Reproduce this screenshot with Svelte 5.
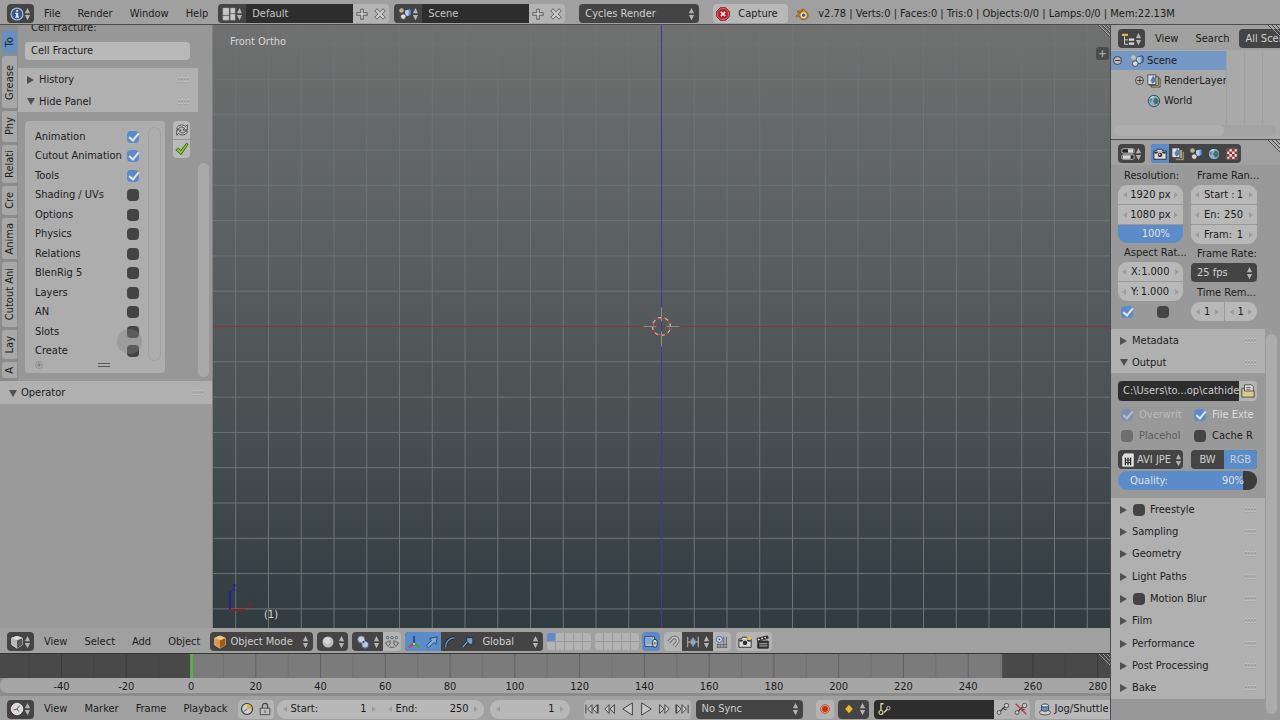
<script lang="ts">
  type Toggle = { name: string; on: boolean };

  const tabs = [
    { label: 'To', size: 22 },
    { label: 'Grease', size: 52 },
    { label: 'Phy', size: 31 },
    { label: 'Relati', size: 38 },
    { label: 'Cre', size: 29 },
    { label: 'Anima', size: 41 },
    { label: 'Cutout Ani', size: 65 },
    { label: 'Lay', size: 29 },
    { label: 'A', size: 16 }
  ];

  let categories: Toggle[] = $state([
    { name: 'Animation', on: true },
    { name: 'Cutout Animation', on: true },
    { name: 'Tools', on: true },
    { name: 'Shading / UVs', on: false },
    { name: 'Options', on: false },
    { name: 'Physics', on: false },
    { name: 'Relations', on: false },
    { name: 'BlenRig 5', on: false },
    { name: 'Layers', on: false },
    { name: 'AN', on: false },
    { name: 'Slots', on: false },
    { name: 'Create', on: false }
  ]);

  const renderPanels = [
    { name: 'Freestyle', check: true },
    { name: 'Sampling', check: false },
    { name: 'Geometry', check: false },
    { name: 'Light Paths', check: false },
    { name: 'Motion Blur', check: true },
    { name: 'Film', check: false },
    { name: 'Performance', check: false },
    { name: 'Post Processing', check: false },
    { name: 'Bake', check: false }
  ];

  // grid of the 3D view, counted from the world origin
  const gridX = Array.from({ length: 60 }, (_, i) => (i - 30) * 32.75).filter((x) => x !== 0);
  const gridY = Array.from({ length: 40 }, (_, i) => (i - 20) * 35.3).filter((y) => y !== 0);

  // timeline range, in frames
  const firstFrame = -59;
  const frameSpan = 342.8;
  const frameX = (frame: number) => ((frame - firstFrame) / frameSpan) * 100 + '%';
  const ticks = Array.from({ length: 17 }, (_, i) => -40 + i * 20);
  const playIcons = [
    { name: 'Jump to start', d: 'M1 3v10M3 8l5-5v10zM9 8l5-5v10zM15 3v10' },
    { name: 'Previous keyframe', d: 'M2 8l5-5v10zM8 8l5-5v10z' },
    { name: 'Play backwards', d: 'M2 8l11-7v14z' },
    { name: 'Play', d: 'M14 8L3 1v14z' },
    { name: 'Next keyframe', d: 'M14 8L9 3v10zM8 8L3 3v10z' },
    { name: 'Jump to end', d: 'M15 3v10M13 8L8 3v10zM7 8L2 3v10zM1 3v10' }
  ];
</script>

{#snippet updown()}
  <svg class="updown" viewBox="0 0 8 14" aria-hidden="true"><path d="M4 0l3 6H1zM4 14l3-6H1z" fill="#b4b4b4" /></svg>
{/snippet}

{#snippet grip()}
  <svg class="grip" viewBox="0 0 12 6" aria-hidden="true">
    <path d="M0 1h12M0 5h12" stroke="#d0d0d0" stroke-dasharray="2 1" />
    <path d="M0 2h12M0 6h12" stroke="#8c8c8c" stroke-dasharray="2 1" />
  </svg>
{/snippet}

{#snippet corner()}
  <svg class="corner" viewBox="0 0 12 12" aria-hidden="true">
    <path d="M0 0l12 12M4 0l8 8M8 0l4 4" stroke="#4a4a4a" />
    <path d="M1 0l11 11M5 0l7 7M9 0l3 3" stroke="#bdbdbd" stroke-width=".7" />
  </svg>
{/snippet}

{#snippet icon(name: string)}
  <svg class="icon" viewBox="0 0 16 16" aria-hidden="true" fill="none" stroke-linejoin="round">
    {#if name === 'info'}
      <circle cx="8" cy="8" r="6.8" fill="#35588f" stroke="#aebac9" stroke-width="1.4" />
      <path d="M7 3.5h2.3v2H7zM6 6.6h3.3v4.3h1v1.4H6v-1.4h1V8H6z" fill="#e6e6e6" />
    {:else if name === 'layout'}
      <path d="M1 1h7v8H1zM1 10h7v5H1zM9.500 1H15v6H9.500zM9.500 8H15v7H9.500z" fill="#c9c9c9" stroke="#8b8b8b" stroke-width=".5" />
    {:else if name === 'scene'}
      <circle cx="4" cy="4" r="2.600" fill="#d7d59a" opacity=".8" />
      <path d="M8 4l5-2 2 1v6l-4 2-3-1z" fill="#6e93c9" stroke="#24426d" />
      <path d="M8 4l4-1v7l-4 0z" fill="#b9cce4" />
      <circle cx="6" cy="11" r="3.200" fill="#d9d9d9" stroke="#3a3a3a" />
    {:else if name === 'plus'}
      <path d="M6.500 2.500h3v4H14v3H9.500V14h-3V9.500H2v-3h4.500z" fill="#c8c8c8" stroke="#555" />
    {:else if name === 'cross'}
      <path d="M2 4.500l2.500-2.500L8 5.500 11.500 2 14 4.500 10.500 8l3.500 3.500-2.500 2.500L8 10.500 4.500 14 2 11.500 5.500 8z" fill="#c8c8c8" stroke="#555" />
    {:else if name === 'stop'}
      <path d="M5 .8h6L15.200 5v6L11 15.200H5L.8 11V5z" fill="#b21d26" stroke="#8c1219" />
      <path d="M5.300 2h5.400L14 5.300v5.400L10.700 14H5.300L2 10.700V5.300z" stroke="#d7a2a5" stroke-width=".8" />
      <path d="M5.500 5.500l5 5M10.500 5.500l-5 5" stroke="#e6e6e6" stroke-width="2" />
    {:else if name === 'blender'}
      <path d="M1 10.500L7 6H3V4.500h6L7.500 3l1.500-1 5 4.500a5 5 0 01-3.500 8c-3 .3-5.500-1.500-5.500-4.500l-3 1.500z" fill="#d58a1b" stroke="#7a4c08" stroke-width=".8" />
      <circle cx="9.800" cy="9.300" r="3.300" fill="#dedede" /><circle cx="9.800" cy="9.300" r="1.800" fill="#2c568e" />
    {:else if name === 'tree'}
      <path d="M1 2h7v2.500H1z" fill="#e0b64e" /><path d="M4 5v9h4M4 9h4" stroke="#ddd" />
      <path d="M9 7.500h6v2.500H9zM9 12h6v2.500H9z" fill="#ddd" />
    {:else if name === 'sliders'}
      <rect x="1" y="2" width="14" height="5" rx="1.500" fill="#252525" stroke="#c9c9c9" /><path d="M8 2.500h6v4H8z" fill="#d8d8d8" />
      <rect x="1" y="9" width="14" height="5" rx="1.500" fill="#252525" stroke="#c9c9c9" /><path d="M2 9.500h9v4H2z" fill="#d8d8d8" />
    {:else if name === 'camera'}
      <path d="M1 4.500h3l1-2h5l1 2h4V14H1z" fill="#ddd" stroke="#222" /><path d="M1.500 5.500h13v2h-13z" fill="#2c2c2c" />
      <circle cx="8" cy="9" r="3.200" fill="#303030" stroke="#f0f0f0" /><circle cx="7.500" cy="8.500" r="1.100" fill="#b7c7da" />
    {:else if name === 'camera-star'}
      <path d="M1 4.500h3l1-2h5l1 2h4V14H1z" fill="#ddd" stroke="#222" /><path d="M1.500 5.500h13v2h-13z" fill="#2c2c2c" />
      <circle cx="8" cy="9" r="3.200" fill="#303030" stroke="#f0f0f0" /><circle cx="13" cy="3.500" r="2.500" fill="#dcc64b" />
    {:else if name === 'layers'}
      <path d="M5 5h10v10H5z" fill="#b9b48f" stroke="#454545" /><path d="M3 3h10v10H3z" fill="#b9b48f" stroke="#454545" />
      <path d="M1 1h9v11H1z" fill="#dedede" stroke="#454545" /><path d="M4 7l3-5 2 2v5l-3 2z" fill="#527fb9" />
    {:else if name === 'world'}
      <circle cx="8" cy="8" r="6.500" fill="#8fb0cc" stroke="#2c4052" />
      <path d="M9 4l3 1 1.500 3-1.500 3-3 1-1-2-1-2z" fill="#3f7563" /><path d="M3 6.500l2-2 1 2.500-2 3z" fill="#5d8a86" /><path d="M4 5c1-1.500 3-2 4-1.500" stroke="#e8f0f5" />
    {:else if name === 'texture'}
      <path d="M2 2h12v12H2z" fill="#ddd" stroke="#555" />
      <path d="M2 2h3v3H2zM8 2h3v3H8zM5 5h3v3H5zM11 5h3v3h-3zM2 8h3v3H2zM8 8h3v3H8zM5 11h3v3H5zM11 11h3v3h-3z" fill="#9c3431" />
    {:else if name === 'cube'}
      <path d="M8 1.500l6 2v7.500L8 15l-6-4V3.500z" fill="#b6b6b6" stroke="#e0e0e0" /><path d="M8 6l6-2.500V11l-6 4z" fill="#555" />
      <path d="M8 1.500l6 2L8 6 2 3.500z" fill="#ddd" />
    {:else if name === 'object'}
      <path d="M8 1l6 2.500v8L8 15l-6-3.500v-8z" fill="#d89848" stroke="#e8c28c" /><path d="M8 6l6-2.500v8L8 15z" fill="#9a5d1a" />
      <path d="M8 1l6 2.500L8 6 2 3.500z" fill="#f0c78d" />
    {:else if name === 'sphere'}
      <circle cx="8" cy="8" r="6.300" fill="#bdbdbd" /><circle cx="7" cy="6.500" r="3.800" fill="#d6d6d6" />
    {:else if name === 'pivot'}
      <circle cx="6" cy="5" r="4" fill="#c9d2dc" stroke="#5f7592" /><circle cx="10.500" cy="11" r="4" fill="#b9c8da" stroke="#2a569a" />
      <circle cx="8.500" cy="8" r="1.800" fill="#244f98" stroke="#fff" stroke-width=".6" />
    {:else if name === 'centers'}
      <g stroke="#4a5f80"><circle cx="3" cy="3" r="1.400" /><circle cx="8" cy="3" r="1.400" /><circle cx="13" cy="3" r="1.400" /></g>
      <path d="M7 7H4Q2 7.500 2 9H0.500l3 4 3-4H5M9 7h3q2 .5 2 2h1.500l-3 4-3-4H11M5 14h6" stroke="#555" />
    {:else if name === 'axes'}
      <path d="M8 10V1" stroke="#2352a5" stroke-width="2.500" /><path d="M8 10l-6 4" stroke="#c5453f" stroke-width="2.500" />
      <path d="M8 10l6 4" stroke="#4e9c3f" stroke-width="2.500" /><circle cx="8" cy="10" r="1" fill="#eee" />
    {:else if name === 'arrow'}
      <path d="M1.500 12.500l6-6.500-2-2 8.500-2-1.500 8.500-2-2-6.500 6z" fill="#86aee0" stroke="#1f3c68" />
    {:else if name === 'arc'}
      <path d="M3 14C3 8 7 4 13 3" stroke="#1d2b40" stroke-width="3.500" /><path d="M3 14C3 8 7 4 13 3" stroke="#7a9ecb" stroke-width="1.600" />
    {:else if name === 'scale'}
      <path d="M2 14l6-7" stroke="#1d2b40" stroke-width="3.500" /><path d="M2 14l6-7" stroke="#7a9ecb" stroke-width="1.600" />
      <path d="M6.500 3h7v7l-3 1-4-4z" fill="#7a9ecb" stroke="#1d2b40" />
    {:else if name === 'lock-view'}
      <path d="M1 2h11v11H1z" fill="#c6d3e6" stroke="#1f3a68" /><path d="M2 3h8v8H2z" fill="#86a6d6" />
      <rect x="10" y="5" width="5" height="9" rx="2.500" fill="#ddd" stroke="#222" /><path d="M12.500 8v3" stroke="#222" />
    {:else if name === 'magnet'}
      <path d="M3 8l4-4c3-3 8 0 6 4l-4 5" stroke="#6b6b6b" stroke-width="4" /><path d="M3 8l4-4c3-3 8 0 6 4l-4 5" stroke="#c2c2c2" stroke-width="2" />
    {:else if name === 'increment'}
      <path d="M2 2v12M14 2v12M2 8h12M6 5v6M10 5v6" stroke="#ccc" /><path d="M8 3v10" stroke="#7fb0e8" stroke-width="2" />
    {:else if name === 'snap-grid'}
      <path d="M2 11h12M2 14h12M10 2v13M13 2v13M6 10v5M3 10v5" stroke="#555" stroke-width=".9" />
      <circle cx="5" cy="5" r="3.500" fill="#c9d6e8" stroke="#3b5f95" /><circle cx="5" cy="5" r="1" fill="#1f437c" />
    {:else if name === 'clapper'}
      <path d="M2 7h12v8H2z" fill="#3a3a3a" stroke="#1c1c1c" /><path d="M1 4l12-3 1 2.500L2 7z" fill="#d5d5d5" stroke="#1c1c1c" />
      <path d="M4 3.500l2 2M8 2.500l2 2M11.500 1.500l1.500 2" stroke="#1c1c1c" stroke-width="1.500" /><path d="M4 10h9M4 12.500h9" stroke="#bbb" />
    {:else if name === 'clock'}
      <circle cx="8" cy="8" r="6.500" fill="#d9d9d9" stroke="#f0f0f0" /><path d="M8 8l3-4M8 8l2 3" stroke="#444" /><path d="M8 8l-4 1" stroke="#b03030" />
    {:else if name === 'range'}
      <circle cx="8" cy="8" r="6.300" fill="#cfcfcf" stroke="#333" stroke-width="1.300" /><path d="M8 8V2.500A5.500 5.500 0 0113.500 8z" fill="#d9b72c" />
      <path d="M8 8l-4 3" stroke="#444" />
    {:else if name === 'padlock'}
      <rect x="2.500" y="7" width="11" height="7.500" fill="#bdbdbd" stroke="#444" /><path d="M5 7V4.500a3 3 0 016 0V7" stroke="#444" stroke-width="1.300" /><path d="M8 9.500v3" stroke="#444" />
    {:else if name === 'record'}
      <circle cx="8" cy="8" r="5" fill="#e29a80" stroke="#c6512e" /><circle cx="8" cy="8" r="3.400" fill="#c93208" />
    {:else if name === 'key'}
      <path d="M8 2.500l5 5.500-5 5.500L3 8z" fill="#e2b83c" stroke="#4b3a0c" />
    {:else if name === 'keyset'}
      <circle cx="4.500" cy="12" r="2.300" stroke="#ddd3a4" stroke-width="1.300" /><path d="M4.500 10V2h3M8 12l4-4" stroke="#ddd3a4" stroke-width="1.500" />
      <circle cx="13" cy="7" r="2" stroke="#cfcfcf" />
    {:else if name === 'insert-key' || name === 'delete-key'}
      <circle cx="3.500" cy="12" r="2.200" fill="#ccc" stroke="#444" /><path d="M5 10.500l5-5M9 8l3 1" stroke="#444" stroke-width="1.500" />
      <circle cx="12" cy="4" r="2.500" fill="#ccc" stroke="#444" />
      {#if name === 'delete-key'}<path d="M2 2l12 12" stroke="#b8434c" stroke-width="2" />{/if}
    {:else if name === 'jog'}
      <ellipse cx="8" cy="12" rx="6.500" ry="2.800" fill="#ccc" stroke="#444" /><path d="M4 4v5c1 2 7 2 8 0V4z" fill="#6d93c0" stroke="#2a3d57" />
      <ellipse cx="8" cy="4" rx="4" ry="1.800" fill="#dce4ee" stroke="#2a3d57" />
    {:else if name === 'folder'}
      <path d="M4 1h8l2 2v7H4z" fill="#e2e2e2" stroke="#444" /><path d="M6 4h5M6 6h5" stroke="#555" />
      <path d="M1 5h3v3h11v7H1z" fill="#d8cb94" stroke="#4c4630" />
    {:else if name === 'file-image'}
      <path d="M4 1h10v14H2V4z" fill="#ddd" stroke="#eee" /><path d="M5 5v9M11 5v9M5 8h6M5 11h6M8 5v9" stroke="#222" stroke-width="1.300" />
    {:else if name === 'refresh'}
      <path d="M2 7c0-5 7-6 10-3l2-2v6H9l2-2C8 4 5 4 4 7zM14 9c0 5-7 6-10 3l-2 2V8h5l-2 2c3 2 6 2 7-1z" fill="#c6c6c6" stroke="#444" />
    {:else if name === 'apply'}
      <path d="M1 9l3-2 2.500 3L13 1.500l2 1L7 14.500z" fill="#83c720" stroke="#356010" />
    {/if}
  </svg>
{/snippet}

{#snippet editor(name: string, label: string)}
  <button class="editor" aria-label={label}>{@render icon(name)}{@render updown()}</button>
{/snippet}

{#snippet num(label: string, value: string, kind: string)}
  <label class="num {kind}"><i class="left"></i><span>{label}</span><input {value} aria-label={label || 'Value'} /><i></i></label>
{/snippet}

<div class="app">
  <header class="bar topbar">
    {@render editor('info', 'Editor type')}
    <nav class="menus">
      <button>File</button><button>Render</button><button>Window</button><button>Help</button>
    </nav>
    <div class="datablock">
      <button class="pick" aria-label="Browse layouts">{@render icon('layout')}{@render updown()}</button>
      <input value="Default" aria-label="Screen layout" />
      <button class="lite" aria-label="Add layout">{@render icon('plus')}</button>
      <button class="lite last" aria-label="Remove layout">{@render icon('cross')}</button>
    </div>
    <div class="datablock">
      <button class="pick" aria-label="Browse scenes">{@render icon('scene')}{@render updown()}</button>
      <input value="Scene" aria-label="Scene" />
      <button class="lite" aria-label="Add scene">{@render icon('plus')}</button>
      <button class="lite last" aria-label="Remove scene">{@render icon('cross')}</button>
    </div>
    <div class="select engine"><select aria-label="Render engine"><option>Cycles Render</option></select>{@render updown()}</div>
    <button class="capture">{@render icon('stop')}<span>Capture</span></button>
    <div class="stats">
      {@render icon('blender')}
      <span>v2.78 | Verts:0 | Faces:0 | Tris:0 | Objects:0/0 | Lamps:0/0 | Mem:22.13M</span>
    </div>
  </header>

  <div class="body">
    <main>
      <div class="work">
        <aside class="tools">
          <div class="shelf">
            <div class="tabs" role="tablist">
              {#each tabs as tab, i}
                <button role="tab" aria-selected={i === 0} class:active={i === 0} style="height: {tab.size}px"><span>{tab.label}</span></button>
              {/each}
            </div>
            <div class="panels">
              <p class="clipped">Cell Fracture:</p>
              <button class="operator">Cell Fracture</button>
              <button class="panel"><i class="tri"></i>History{@render grip()}</button>
              <button class="panel"><i class="tri open"></i>Hide Panel{@render grip()}</button>
              <div class="hide-panel">
                <div class="listbox">
                  <div class="listrow">
                    <div class="list">
                      {#each categories as cat}
                        <label>{cat.name}<input type="checkbox" bind:checked={cat.on} /></label>
                      {/each}
                    </div>
                    <div class="list-scroll"></div>
                  </div>
                  <div class="list-foot"><svg viewBox="0 0 8 8" aria-hidden="true"><circle cx="4" cy="4" r="3.500" fill="none" stroke="#888" stroke-width=".7" /><path d="M4 2v4M2 4h4" stroke="#777" /></svg><b></b></div>
                  <div class="click-halo"></div>
                </div>
                <div class="list-buttons">
                  <button aria-label="Refresh">{@render icon('refresh')}</button>
                  <button aria-label="Apply">{@render icon('apply')}</button>
                </div>
              </div>
            </div>
            <div class="shelf-scroll"><div></div></div>
          </div>
          <button class="panel last-op"><i class="tri open"></i>Operator{@render grip()}</button>
        </aside>

        <section class="viewport">
          <svg class="grid" width="100%" height="100%" aria-hidden="true">
            <svg x="50%" y="50%" overflow="visible">
              <g class="lines">
                {#each gridX as x}<line x1={x} x2={x} y1="-700" y2="700" />{/each}
                {#each gridY as y}<line y1={y} y2={y} x1="-980" x2="980" />{/each}
              </g>
              <line x1="-980" x2="980" stroke="#83393c" />
              <line y1="-700" y2="700" stroke="#3a3aa0" />
              <circle r="9" fill="none" stroke="#c9b9b9" stroke-width="1.300" />
              <circle r="9" fill="none" stroke="#b22a2a" stroke-width="1.300" stroke-dasharray="3.500 3.570" />
              <path d="M-18 0H-5M5 0H18M0 -19V-5M0 5V20" stroke="#8e8e80" />
            </svg>
          </svg>
          <span class="view-name">Front Ortho</span>
          <button class="region-toggle" aria-label="Show properties region">+</button>
          {@render corner()}
          <div class="gizmo">
            <svg viewBox="0 0 30 30" aria-hidden="true">
              <path d="M3 7v19" stroke="#2121a0" stroke-width="2" /><path d="M3 26h16" stroke="#8a2025" stroke-width="2" />
              <path d="M5 1h4L5 6h4" stroke="#2121a0" fill="none" /><path d="M21 19l5 4M26 19l-5 4" stroke="#8a2025" />
            </svg>
            <span>(1)</span>
          </div>
        </section>
      </div>

      <div class="bar viewbar">
        {@render editor('cube', 'Editor type')}
        <nav class="menus">
          <button>View</button><button>Select</button><button>Add</button><button>Object</button>
        </nav>
        <div class="select mode">{@render icon('object')}<select aria-label="Mode"><option>Object Mode</option></select>{@render updown()}</div>
        <button class="editor wide" aria-label="Viewport shading">{@render icon('sphere')}{@render updown()}</button>
        <div class="joined">
          <button class="editor wide" aria-label="Pivot point">{@render icon('pivot')}{@render updown()}</button>
          <button class="lite last" aria-label="Manipulate centers">{@render icon('centers')}</button>
        </div>
        <div class="joined dark">
          <button class="sq on" aria-label="Manipulator">{@render icon('axes')}</button>
          <button class="sq on" aria-label="Translate">{@render icon('arrow')}</button>
          <button class="sq" aria-label="Rotate">{@render icon('arc')}</button>
          <button class="sq" aria-label="Scale">{@render icon('scale')}</button>
          <div class="select orient"><select aria-label="Orientation"><option>Global</option></select>{@render updown()}</div>
        </div>
        <div class="layer-sets">
          {#each [0, 1] as set}
            <div class="layer-set">
              {#each Array(10) as _, i}<button class:on={set === 0 && i === 0} aria-label="Layer {set * 10 + i + 1}"></button>{/each}
            </div>
          {/each}
        </div>
        <button class="sq on round" aria-label="Lock to scene">{@render icon('lock-view')}</button>
        <div class="joined">
          <button class="lite first" aria-label="Snap">{@render icon('magnet')}</button>
          <button class="editor wide square" aria-label="Snap element">{@render icon('increment')}{@render updown()}</button>
          <button class="lite last" aria-label="Snap to grid">{@render icon('snap-grid')}</button>
        </div>
        <div class="joined">
          <button class="lite first" aria-label="Render image">{@render icon('camera-star')}</button>
          <button class="lite last" aria-label="Render animation">{@render icon('clapper')}</button>
        </div>
      </div>

      <section class="timeline">
        <svg width="100%" height="100%" aria-hidden="true">
          <rect width="100%" height="24" fill="#494949" />
          <rect x={frameX(0)} width={(250.500 / frameSpan) * 100 + '%'} height="24" fill="#7b7b7b" />
          {#each ticks as frame}
            <line x1={frameX(frame - 10)} x2={frameX(frame - 10)} y2="24" stroke="#000" opacity=".07" />
            <line x1={frameX(frame)} x2={frameX(frame)} y2="24" stroke="#000" opacity=".2" />
          {/each}
          <rect x={frameX(-0.300)} width="3" height="24" fill="#5fae48" />
        </svg>
        {@render corner()}
        <div class="scale">
          <svg width="100%" height="16">
            {#each ticks as frame}<text x={frameX(frame)} y="12">{frame}</text>{/each}
          </svg>
        </div>
      </section>

      <div class="bar playbar">
        {@render editor('clock', 'Editor type')}
        <nav class="menus">
          <button>View</button><button>Marker</button><button>Frame</button><button>Playback</button>
        </nav>
        <div class="joined">
          <button class="lite first" aria-label="Preview range">{@render icon('range')}</button>
          <button class="lite last" aria-label="Lock time cursor">{@render icon('padlock')}</button>
        </div>
        <div class="joined range">
          {@render num('Start:', '1', 'start')}
          {@render num('End:', '250', 'end')}
        </div>
        {@render num('', '1', 'current')}
        <div class="joined transport">
          {#each playIcons as play}
            <button aria-label={play.name}><svg class="icon" viewBox="0 0 16 16" aria-hidden="true"><path d={play.d} fill="#c8c8c8" stroke="#333" stroke-linejoin="round" /></svg></button>
          {/each}
        </div>
        <div class="select sync"><select aria-label="Sync mode"><option>No Sync</option></select>{@render updown()}</div>
        <button class="lite first last record" aria-label="Auto keying">{@render icon('record')}</button>
        <button class="editor wide" aria-label="Keyframe type">{@render icon('key')}{@render updown()}</button>
        <div class="joined keying">
          <div class="keyfield">{@render icon('keyset')}<input aria-label="Keying set" /></div>
          <button class="lite" aria-label="Insert keyframe">{@render icon('insert-key')}</button>
          <button class="lite last" aria-label="Delete keyframe">{@render icon('delete-key')}</button>
        </div>
        <button class="jog">{@render icon('jog')}Jog/Shuttle</button>
      </div>
    </main>

    <aside class="side">
      <section class="outliner">
        <div class="bar">
          {@render editor('tree', 'Editor type')}
          <nav class="menus"><button>View</button><button>Search</button></nav>
          <div class="select scenes"><select aria-label="Display mode"><option>All Scenes</option></select></div>
        </div>
        {@render corner()}
        <div class="tree">
          <ul>
            <li class="selected"><i class="fold">−</i>{@render icon('scene')}Scene</li>
            <li class="child"><i class="fold">+</i>{@render icon('layers')}RenderLayer</li>
            <li class="child"><i class="fold none"></i>{@render icon('world')}World</li>
          </ul>
          <div class="cols"><i></i><i></i><i></i></div>
        </div>
        <div class="tree-scroll"><div></div></div>
      </section>

      <section class="props">
        <div class="bar">
          {@render editor('sliders', 'Editor type')}
          <div class="joined dark contexts">
            {#each ['camera', 'layers', 'scene', 'world', 'texture'] as name, i}
              <button class="sq" class:on={i === 0} aria-label={name}>{@render icon(name)}</button>
            {/each}
          </div>
        </div>
        {@render corner()}
        <div class="props-body">
          <div class="props-panels">
            <div class="dimensions">
              <div>
                <h4>Resolution:</h4>
                <div class="stack">
                  {@render num('', '1920 px', 'mid')}
                  {@render num('', '1080 px', 'mid')}
                  <input class="percent" value="100%" aria-label="Resolution percentage" />
                </div>
                <h4>Aspect Rat...</h4>
                <div class="stack">
                  {@render num('X:', '1.000', 'aspect')}
                  {@render num('Y:', '1.000', 'aspect')}
                </div>
                <div class="ticks"><input type="checkbox" checked aria-label="Border" /><input type="checkbox" aria-label="Crop" /></div>
              </div>
              <div>
                <h4>Frame Ran...</h4>
                <div class="stack">
                  {@render num('Start :', '1', 'frames')}
                  {@render num('En:', '250', 'frames')}
                  {@render num('Fram:', '1', 'frames')}
                </div>
                <h4>Frame Rate:</h4>
                <div class="select fps"><select aria-label="Frame rate"><option>25 fps</option></select>{@render updown()}</div>
                <h4>Time Rem...</h4>
                <div class="remap">{@render num('', '1', 'tiny')}{@render num('', '1', 'tiny')}</div>
              </div>
            </div>
            <button class="panel"><i class="tri"></i>Metadata{@render grip()}</button>
            <button class="panel"><i class="tri open"></i>Output{@render grip()}</button>
            <div class="output">
              <div class="path"><input value="C:\Users\to...op\cathide" aria-label="Output path" /><button class="lite last" aria-label="Browse">{@render icon('folder')}</button></div>
              <div class="checks">
                <label class="dim light"><input type="checkbox" checked disabled /><span>Overwrit</span></label>
                <label class="light"><input type="checkbox" checked /><span>File Exte</span></label>
                <label class="dim"><input type="checkbox" disabled /><span>Placehol</span></label>
                <label><input type="checkbox" /><span>Cache R</span></label>
              </div>
              <div class="format">
                <div class="select filetype">{@render icon('file-image')}<select aria-label="File format"><option>AVI JPE</option></select>{@render updown()}</div>
                <div class="color-mode"><button>BW</button><button class="on">RGB</button></div>
              </div>
              <label class="quality"><span>Quality:</span><input value="90%" /></label>
            </div>
            <div class="closed-panels">
              {#each renderPanels as panel}
                <div class="panel">
                  <i class="tri"></i>
                  {#if panel.check}<label><input type="checkbox" />{panel.name}</label>{:else}<span>{panel.name}</span>{/if}
                  {@render grip()}
                </div>
              {/each}
            </div>
          </div>
          <div class="props-scroll"><div></div></div>
        </div>
      </section>
    </aside>
  </div>
</div>

<style>
  :global(body) {
    overflow: hidden;
    background: #999;
  }

  .app {
    height: 100vh;
    display: flex;
    flex-direction: column;
    font: 11px/18px 'DejaVu Sans Condensed', 'DejaVu Sans', sans-serif;
    color: #1c1c1c;
    white-space: nowrap;
  }

  .app * {
    box-sizing: border-box;
  }

  button, input, select {
    font: inherit;
    color: inherit;
    border: 0;
    margin: 0;
    padding: 0;
    background: none;
    min-width: 0;
    border-radius: 0;
    outline: 0;
  }

  h4, p, ul {
    margin: 0;
    padding: 0;
    font-size: 11px;
    font-weight: normal;
    list-style: none;
  }

  .icon {
    width: 14px;
    height: 14px;
    flex: none;
  }

  .updown {
    width: 7px;
    height: 14px;
    flex: none;
  }

  .grip {
    width: 12px;
    height: 6px;
    margin-left: auto;
  }

  .corner {
    position: absolute;
    top: 0;
    right: 0;
    width: 12px;
    height: 12px;
  }

  /* header bars */
  .bar {
    display: flex;
    align-items: center;
    height: 25px;
    flex: none;
    padding: 2px 0 0 7px;
    background: #a0a0a0;
    overflow: hidden;
  }

  .topbar {
    padding-top: 3px;
    border-bottom: 1px solid #4c4c4c;
  }

  .editor {
    width: 27px;
    height: 19px;
    flex: none;
    display: flex;
    align-items: center;
    justify-content: space-between;
    padding: 0 3px;
    border-radius: 4px;
    background: #444;
  }

  .editor.wide {
    width: 31px;
    padding: 0 3px 0 4px;
  }

  .editor.square {
    border-radius: 0;
  }

  .menus {
    display: flex;
    gap: 17px;
    padding: 0 10px;
  }

  .datablock {
    display: flex;
    height: 19px;
    margin-right: 5px;
  }

  .datablock .pick {
    width: 28px;
    display: flex;
    align-items: center;
    justify-content: space-between;
    padding: 0 4px;
    border-radius: 4px 0 0 4px;
    background: #444;
  }

  .datablock input {
    width: 107px;
    padding-left: 6px;
    background: #2d2d2d;
    color: #c6c6c6;
  }

  .lite {
    width: 18px;
    height: 19px;
    flex: none;
    display: flex;
    align-items: center;
    justify-content: center;
    background: #b4b4b4;
  }

  .lite.last {
    border-radius: 0 4px 4px 0;
  }

  .lite.first {
    border-radius: 4px 0 0 4px;
  }

  .lite.first.last {
    border-radius: 4px;
  }

  .select {
    display: flex;
    align-items: center;
    height: 19px;
    flex: none;
    padding: 0 4px 0 6px;
    border-radius: 4px;
    background: #444;
    color: #cfcfcf;
  }

  .select select {
    appearance: none;
    flex: 1;
    height: 19px;
  }

  .engine {
    width: 120px;
    margin-left: 9px;
  }

  .capture {
    display: flex;
    align-items: center;
    gap: 8px;
    width: 75px;
    height: 19px;
    flex: none;
    margin: 0 7px 0 14px;
    padding-left: 3px;
    border-radius: 4px;
    background: #b8b8b8;
  }

  .stats {
    display: flex;
    align-items: center;
    gap: 9px;
  }

  .joined {
    display: flex;
    align-items: center;
    flex: none;
  }

  /* main areas */
  .body {
    flex: 1;
    min-height: 0;
    display: flex;
  }

  main {
    flex: 1;
    min-width: 0;
    display: flex;
    flex-direction: column;
  }

  .work {
    flex: 1;
    min-height: 0;
    display: flex;
  }

  .tools {
    width: 213px;
    flex: none;
    overflow: hidden;
    background: #9a9a9a;
    border-right: 1px solid #808080;
  }

  .shelf {
    display: flex;
    height: 356px;
    background: #979797;
  }

  .tabs {
    width: 18px;
    flex: none;
    display: flex;
    flex-direction: column;
    gap: 3px;
    padding: 6px 1px 0 2px;
    background: #8c8c8c;
  }

  .tabs button {
    flex: none;
    display: flex;
    align-items: center;
    justify-content: center;
    overflow: hidden;
    border-radius: 3px 0 0 3px;
    background: #a8a8a8;
    font-size: 11px;
    line-height: 15px;
  }

  .tabs .active {
    background: #6590c4;
  }

  .tabs span {
    writing-mode: vertical-rl;
    transform: rotate(180deg);
  }

  .panels {
    width: 180px;
    flex: none;
    overflow: hidden;
  }

  .clipped {
    height: 17px;
    line-height: 6px;
    padding-left: 13px;
  }

  .operator {
    display: block;
    width: 165px;
    height: 18px;
    margin: 0 0 8px 7px;
    padding-left: 6px;
    border-radius: 4px;
    background: #b9b9b9;
    text-align: left;
  }

  .panel {
    display: flex;
    align-items: center;
    width: 100%;
    height: 22px;
    padding: 1px 8px 0 9px;
    background: #b0b0b0;
  }

  .tri {
    width: 0;
    margin-right: 5px;
    border-left: 7px solid #505050;
    border-top: 4px solid transparent;
    border-bottom: 4px solid transparent;
  }

  .tri.open {
    border-top: 7px solid #505050;
    border-left: 4px solid transparent;
    border-right: 4px solid transparent;
    border-bottom: 0;
    margin-right: 4px;
  }

  .hide-panel {
    display: flex;
    align-items: flex-start;
    gap: 8px;
    padding: 9px 0 0 7px;
  }

  .listbox {
    position: relative;
    width: 140px;
    height: 252px;
    padding: 6px 4px 0 10px;
    border-radius: 4px;
    background: #adadad;
  }

  .listrow {
    display: flex;
    gap: 9px;
    height: 234px;
  }

  .list {
    flex: 1;
    display: grid;
    grid-template-rows: repeat(12, 1fr);
  }

  .list label {
    display: flex;
    align-items: center;
    justify-content: space-between;
  }

  .list-scroll {
    width: 13px;
    flex: none;
    border: 1px solid #a2a2a2;
    border-radius: 7px;
  }

  .list-foot {
    display: flex;
    gap: 55px;
    align-items: center;
    height: 7px;
  }

  .list-foot svg {
    width: 8px;
    height: 8px;
  }

  .list-foot b {
    width: 12px;
    height: 4px;
    border: solid #555;
    border-width: 1px 0;
  }

  .click-halo {
    position: absolute;
    left: 92px;
    top: 208px;
    width: 25px;
    height: 25px;
    border-radius: 50%;
    background: rgba(130, 130, 130, 0.4);
    pointer-events: none;
  }

  .list-buttons {
    width: 17px;
  }

  .list-buttons button {
    display: flex;
    align-items: center;
    justify-content: center;
    width: 17px;
    height: 18px;
    background: #bababa;
    border-radius: 4px 4px 0 0;
    margin-bottom: 1px;
  }

  .list-buttons button + button {
    border-radius: 0 0 4px 4px;
  }

  .shelf-scroll {
    width: 11px;
    padding-top: 138px;
  }

  .shelf-scroll div {
    height: 214px;
    border-radius: 6px;
    background: #a9a9a9;
  }

  .last-op {
    height: 23px;
  }

  input[type='checkbox'] {
    appearance: none;
    position: relative;
    width: 12px;
    height: 12px;
    flex: none;
    border-radius: 4px;
    background: #444;
  }

  input[type='checkbox']:checked {
    background: #5b8bc9;
  }

  input[type='checkbox']:checked::after {
    content: '';
    position: absolute;
    left: 4px;
    top: 0;
    width: 4px;
    height: 8px;
    border: solid #e4e4e4;
    border-width: 0 2px 2px 0;
    transform: rotate(40deg);
  }

  /* 3D view */
  .viewport {
    position: relative;
    flex: 1;
    min-width: 0;
    background: linear-gradient(#707070, #606465 27%, #53595b 50%, #414b4d 75%, #303c40);
  }

  .grid {
    display: block;
    position: absolute;
    inset: 0;
  }

  .lines {
    stroke: #6d7474;
  }

  .view-name {
    position: absolute;
    left: 17px;
    top: 8px;
    color: #d6d6d6;
  }

  .region-toggle {
    position: absolute;
    right: 1px;
    top: 22px;
    width: 13px;
    height: 13px;
    border-radius: 3px;
    background: #4b4d4d;
    color: #a8a8a8;
    font-weight: bold;
    line-height: 12px;
  }

  .gizmo {
    position: absolute;
    left: 14px;
    bottom: 4px;
    display: flex;
    align-items: flex-end;
    gap: 7px;
    color: #d6d6d6;
  }

  .gizmo svg {
    width: 30px;
    height: 30px;
    margin-bottom: 10px;
  }

  /* 3D view header */
  .mode {
    width: 103px;
    gap: 3px;
    margin-right: 4px;
    padding-left: 3px;
  }

  .viewbar .wide + .joined {
    margin: 0 4px;
  }

  .joined.dark {
    border-radius: 4px;
    background: #444;
    overflow: hidden;
  }

  .sq {
    width: 18px;
    height: 19px;
    flex: none;
    display: flex;
    align-items: center;
    justify-content: center;
  }

  .sq.on {
    background: #5b8bc9;
  }

  .sq.round {
    border-radius: 4px;
    margin-right: 4px;
  }

  .orient {
    width: 66px;
    padding-left: 5px;
  }

  .layer-sets {
    display: flex;
    gap: 4px;
    padding: 0 3px 0 4px;
    flex: none;
  }

  .layer-set {
    display: grid;
    grid-template-columns: repeat(5, 8px);
    gap: 1px;
    border-radius: 3px;
    overflow: hidden;
    background: #999;
  }

  .layer-set button {
    height: 8px;
    background: #b4b4b4;
  }

  .layer-set .on {
    background: #5b8bc9;
  }

  .sq.round + .joined {
    margin-right: 5px;
  }

  .joined > .editor:first-child {
    border-radius: 4px 0 0 4px;
  }

  /* timeline */
  .timeline {
    position: relative;
    height: 43px;
    flex: none;
    display: flex;
    flex-direction: column;
    border-top: 1px solid #353535;
    background: #8c8c8c;
  }

  .timeline > svg:first-child {
    display: block;
    height: 24px;
    flex: none;
  }

  .scale {
    height: 15px;
    background: #a6a6a6;
    border-radius: 7px 0 0 7px;
    margin-bottom: 3px;
  }

  .scale svg {
    display: block;
  }

  .scale text {
    text-anchor: middle;
    fill: #1c1c1c;
  }

  .playbar {
    height: 24px;
  }

  .num {
    display: flex;
    align-items: center;
    height: 19px;
    padding: 0 6px;
    background: #b8b8b8;
    flex: none;
  }

  .num i {
    flex: none;
    border-left: 4px solid #9c9c9c;
    border-top: 3px solid transparent;
    border-bottom: 3px solid transparent;
  }

  .num .left {
    border-left: 0;
    border-right: 4px solid #9c9c9c;
  }

  .num input {
    flex: 1;
    text-align: right;
  }

  .playbar .num span {
    padding-left: 4px;
  }

  .playbar .num input {
    padding-right: 5px;
  }

  .range {
    margin: 0 6px 0 3px;
  }

  .start {
    width: 105px;
    border-radius: 9px 0 0 9px;
  }

  .end {
    width: 102px;
    border-radius: 0 9px 9px 0;
  }

  .current {
    width: 80px;
    border-radius: 9px;
  }

  .transport {
    width: 107px;
    height: 19px;
    margin: 0 5px 0 14px;
    border-radius: 4px;
    background: #b4b4b4;
  }

  .transport button {
    flex: 1;
    display: flex;
    justify-content: center;
  }

  .sync {
    width: 107px;
  }

  .record {
    margin: 0 4px 0 13px;
  }

  .keying {
    margin: 0 5px;
  }

  .keyfield {
    display: flex;
    align-items: center;
    width: 120px;
    height: 19px;
    padding-left: 3px;
    border-radius: 4px 0 0 4px;
    background: #2d2d2d;
    color: #ccc;
  }

  .keyfield input {
    flex: 1;
  }

  .jog {
    display: flex;
    align-items: center;
    gap: 3px;
    height: 19px;
    flex: 1;
    padding-left: 3px;
    border-radius: 4px 0 0 4px;
    background: #b8b8b8;
  }

  /* outliner and properties */
  .side {
    width: 170px;
    flex: none;
    display: flex;
    flex-direction: column;
    overflow: hidden;
    border-left: 1px solid #4c4c4c;
  }

  .outliner, .props {
    position: relative;
  }

  .outliner {
    height: 115px;
    flex: none;
    border-bottom: 1px solid #4c4c4c;
    background: #a9a9a9;
  }

  .scenes {
    width: 80px;
  }

  .tree {
    display: flex;
    height: 75px;
    padding-top: 1px;
  }

  .tree ul {
    width: 115px;
    flex: none;
    overflow: hidden;
  }

  .tree li {
    display: flex;
    align-items: center;
    gap: 3px;
    height: 19px;
    margin-bottom: 1px;
    padding-left: 2px;
  }

  .tree .selected {
    background: #7497c4;
  }

  .selected .icon {
    margin-left: 5px;
  }

  .tree .child {
    padding-left: 24px;
  }

  .fold {
    width: 9px;
    height: 9px;
    flex: none;
    border: 1px solid #444;
    border-radius: 50%;
    background: #bababa;
    font: 9px/7px 'DejaVu Sans', sans-serif;
    text-align: center;
  }

  .fold.none {
    visibility: hidden;
  }

  .cols {
    display: flex;
  }

  .cols i {
    width: 18px;
    border-left: 1px solid #a0a0a0;
  }

  .tree-scroll {
    height: 11px;
    margin: 0 4px 0 3px;
    border-radius: 6px;
    background: #a3a3a3;
  }

  .tree-scroll div {
    width: 110px;
    height: 11px;
    border-radius: 6px;
    background: #aeaeae;
  }

  .contexts {
    margin-left: 6px;
  }

  .props {
    flex: 1;
    min-height: 0;
    background: #999;
  }

  .props-body {
    display: flex;
  }

  .props-panels {
    width: 154px;
    flex: none;
  }

  .dimensions {
    display: grid;
    grid-template-columns: 65px 66px;
    gap: 8px;
    height: 164px;
    padding: 1px 0 0 7px;
  }

  .dimensions h4 {
    height: 19px;
    padding-left: 6px;
    line-height: 19px;
  }

  .stack {
    display: grid;
    grid-template-columns: minmax(0, 1fr);
    gap: 1px;
    border-radius: 9px;
    overflow: hidden;
  }

  .mid {
    padding: 0 5px;
  }

  .mid input, .tiny input {
    text-align: center;
  }

  .stack .aspect, .stack .frames {
    padding: 0 4px;
  }

  .stack .aspect span, .stack .frames span {
    padding-left: 5px;
  }

  .stack .aspect input, .stack .frames input {
    padding-right: 6px;
  }

  .percent {
    height: 18px;
    padding-right: 13px;
    background: #5b8bc9;
    color: #e0e0e0;
    text-align: right;
  }

  .ticks {
    display: flex;
    gap: 24px;
    padding: 5px 0 0 3px;
  }

  .fps {
    margin-bottom: 1px;
  }

  .remap {
    display: flex;
    gap: 1px;
    border-radius: 9px;
    overflow: hidden;
  }

  .tiny {
    flex: 1;
    min-width: 0;
    padding: 0 5px;
  }

  .output {
    display: grid;
    grid-template-columns: minmax(0, 1fr);
    gap: 2px;
    height: 125px;
    padding: 8px 8px 0 7px;
    align-content: start;
  }

  .path {
    display: flex;
    height: 20px;
  }

  .path .lite {
    height: 20px;
  }

  .path input {
    flex: 1;
    padding-left: 5px;
    border-radius: 4px 0 0 4px;
    background: #2d2d2d;
    color: #ccc;
  }

  .checks {
    display: grid;
    grid-template-columns: 65px 66px;
    grid-auto-rows: 21px;
    column-gap: 8px;
    height: 45px;
    padding-top: 1px;
  }

  .checks label {
    display: flex;
    align-items: center;
    gap: 6px;
    padding-left: 3px;
    overflow: hidden;
  }

  .light {
    color: #dcdcdc;
  }

  .dim {
    opacity: 0.5;
  }

  .format {
    display: flex;
    gap: 8px;
  }

  .filetype {
    width: 65px;
    gap: 2px;
    padding: 0 1px 0 3px;
  }

  .color-mode {
    flex: 1;
    display: flex;
    border-radius: 4px;
    overflow: hidden;
    background: #444;
    color: #cfcfcf;
  }

  .color-mode button {
    flex: 1;
  }

  .color-mode .on {
    background: #5b8bc9;
  }

  .quality {
    display: flex;
    align-items: center;
    height: 19px;
    padding: 0 13px 0 12px;
    border-radius: 9px;
    background: linear-gradient(90deg, #5b8bc9 90%, #3c3c3c 90%);
    color: #e0e0e0;
  }

  .quality input {
    flex: 1;
    text-align: right;
  }

  .closed-panels {
    display: grid;
    grid-template-rows: repeat(9, 1fr);
    height: 201px;
  }

  .closed-panels .panel {
    height: auto;
  }

  .closed-panels label {
    display: flex;
    align-items: center;
    gap: 5px;
    padding-left: 1px;
  }

  .props-scroll {
    width: 12px;
    padding: 169px 0 0 1px;
  }

  .props-scroll div {
    height: 380px;
    border-radius: 6px;
    background: #acacac;
  }
</style>
